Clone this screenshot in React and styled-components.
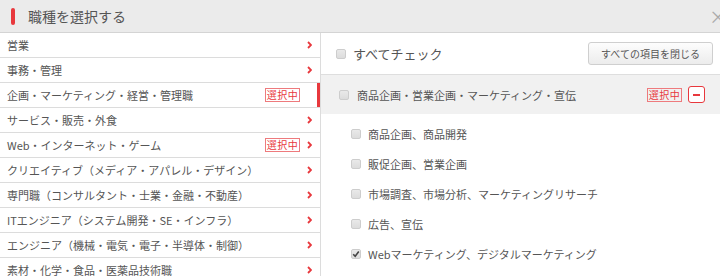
import React from 'react'
import styled, { createGlobalStyle } from 'styled-components'

const GlobalStyle = createGlobalStyle`
  html, body {
    margin: 0;
    padding: 0;
    background: #fff;
    overflow: hidden;
  }
  body {
    font-family: "Noto Sans CJK JP", "Noto Sans", "Liberation Sans", sans-serif;
    color: #555;
  }
`;

const RED = '#e8383d';

const Modal = styled.div`
  width: 720px;
  height: 276px;
  overflow: hidden;
  display: flex;
  flex-direction: column;
`;

const Header = styled.div`
  height: 32px;
  flex: none;
  background: #ebebeb;
  border-bottom: 1px solid #d4d4d4;
  display: flex;
  align-items: center;
  padding-left: 11px;
  overflow: hidden;
`;

const TitleMark = styled.span`
  width: 4px;
  height: 17px;
  border-radius: 2px;
  background: ${RED};
  margin-right: 13px;
`;

const Title = styled.h1`
  margin: 0;
  font-size: 14px;
  font-weight: 400;
  color: #555;
  letter-spacing: 0;
`;

const Close = styled.span`
  margin-left: auto;
  margin-right: -7px;
  font-size: 18px;
  color: #aaa;
  line-height: 1;
`;

const Body = styled.div`
  flex: 1;
  display: flex;
  min-height: 0;
`;

const LeftCol = styled.ul`
  list-style: none;
  margin: 0;
  padding: 0;
  width: 320px;
  flex: none;
  border-right: 1px solid #dcdcdc;
`;

const LeftRow = styled.li`
  height: 24px;
  border-bottom: 1px solid #dcdcdc;
  display: flex;
  align-items: center;
  padding: 0 8px 0 7px;
  font-size: 11px;
  color: #555;
  white-space: nowrap;
  box-shadow: ${p => (p.active ? `inset -3px 0 0 ${RED}` : 'none')};
`;

const RowLabel = styled.span`
  flex: 1;
`;

const Badge = styled.span`
  width: 33px;
  height: 12px;
  border: 1px solid #ee7a7d;
  color: ${RED};
  font-size: 10px;
  line-height: 12px;
  text-align: center;
  margin-right: ${p => p.gap || 7}px;
  letter-spacing: 0.5px;
`;

const ChevronSlot = styled.span`
  width: 5px;
  display: flex;
  align-items: center;
`;

const Chevron = () => (
  <svg width="5" height="8" viewBox="0 0 5 8">
    <path d="M1 1 L4 4 L1 7" fill="none" stroke={RED} strokeWidth="1.8" />
  </svg>
);

const RightCol = styled.div`
  flex: 1;
  display: flex;
  flex-direction: column;
`;

const CheckAllRow = styled.div`
  height: 41px;
  display: flex;
  align-items: center;
  padding: 0 7px 0 15px;
`;

const CheckAllLabel = styled.span`
  font-size: 13px;
  color: #555;
  margin-left: 7px;
`;

const CloseAllButton = styled.button`
  margin-left: auto;
  width: 125px;
  height: 23px;
  border: 1px solid #cfcfcf;
  border-radius: 3px;
  background: linear-gradient(#fdfdfd, #ececec);
  font-family: inherit;
  font-size: 10px;
  color: #555;
  padding: 0;
  cursor: pointer;
`;

const CategoryRow = styled.div`
  height: 39px;
  border-top: 1px solid #dedede;
  background: #f1f1f1;
  display: flex;
  align-items: center;
  padding: 0 15px 0 18px;
`;

const CategoryLabel = styled.span`
  font-size: 11px;
  color: #555;
  margin-left: 8px;
  flex: 1;
`;

const Minus = styled.span`
  width: 15px;
  height: 15px;
  border: 1px solid ${RED};
  border-radius: 3px;
  background: #fff;
  display: flex;
  align-items: center;
  justify-content: center;
  &::before {
    content: '';
    width: 7px;
    height: 2px;
    background: ${RED};
  }
`;

const SubList = styled.ul`
  list-style: none;
  margin: 0;
  padding: 5px 0 0 30px;
`;

const SubItem = styled.li`
  height: 30px;
  display: flex;
  align-items: center;
  font-size: 11px;
  color: #555;
`;

const SubLabel = styled.span`
  margin-left: 7px;
`;

const Box = styled.span`
  width: 8px;
  height: 8px;
  flex: none;
  border: 1px solid #cdcdcd;
  border-radius: 2px;
  background: linear-gradient(#e9e9e9, #dcdcdc);
  display: flex;
  align-items: center;
  justify-content: center;
`;

const CheckBox = ({ checked }) => (
  <Box>
    {checked && (
      <svg width="8" height="8" viewBox="0 0 8 8">
        <path d="M1.2 4.2 L3.2 6.2 L6.8 1.5" fill="none" stroke="#444" strokeWidth="1.6" />
      </svg>
    )}
  </Box>
);

const categories = [
  { label: '営業' },
  { label: '事務・管理' },
  { label: '企画・マーケティング・経営・管理職', selected: true, active: true },
  { label: 'サービス・販売・外食' },
  { label: 'Web・インターネット・ゲーム', selected: true },
  { label: 'クリエイティブ（メディア・アパレル・デザイン）' },
  { label: '専門職（コンサルタント・士業・金融・不動産）' },
  { label: 'ITエンジニア（システム開発・SE・インフラ）' },
  { label: 'エンジニア（機械・電気・電子・半導体・制御）' },
  { label: '素材・化学・食品・医薬品技術職' },
];

const subItems = [
  { label: '商品企画、商品開発' },
  { label: '販促企画、営業企画' },
  { label: '市場調査、市場分析、マーケティングリサーチ' },
  { label: '広告、宣伝' },
  { label: 'Webマーケティング、デジタルマーケティング', checked: true },
];

export default function App() {
  return (
    <Modal>
      <GlobalStyle />
      <Header>
        <TitleMark />
        <Title>職種を選択する</Title>
        <Close>×</Close>
      </Header>
      <Body>
        <LeftCol>
          {categories.map(c => (
            <LeftRow key={c.label} active={c.active}>
              <RowLabel>{c.label}</RowLabel>
              {c.selected && <Badge>選択中</Badge>}
              <ChevronSlot>{!c.active && <Chevron />}</ChevronSlot>
            </LeftRow>
          ))}
        </LeftCol>
        <RightCol>
          <CheckAllRow>
            <CheckBox />
            <CheckAllLabel>すべてチェック</CheckAllLabel>
            <CloseAllButton>すべての項目を閉じる</CloseAllButton>
          </CheckAllRow>
          <CategoryRow>
            <CheckBox />
            <CategoryLabel>商品企画・営業企画・マーケティング・宣伝</CategoryLabel>
            <Badge gap={6}>選択中</Badge>
            <Minus />
          </CategoryRow>
          <SubList>
            {subItems.map(s => (
              <SubItem key={s.label}>
                <CheckBox checked={s.checked} />
                <SubLabel>{s.label}</SubLabel>
              </SubItem>
            ))}
          </SubList>
        </RightCol>
      </Body>
    </Modal>
  );
}
